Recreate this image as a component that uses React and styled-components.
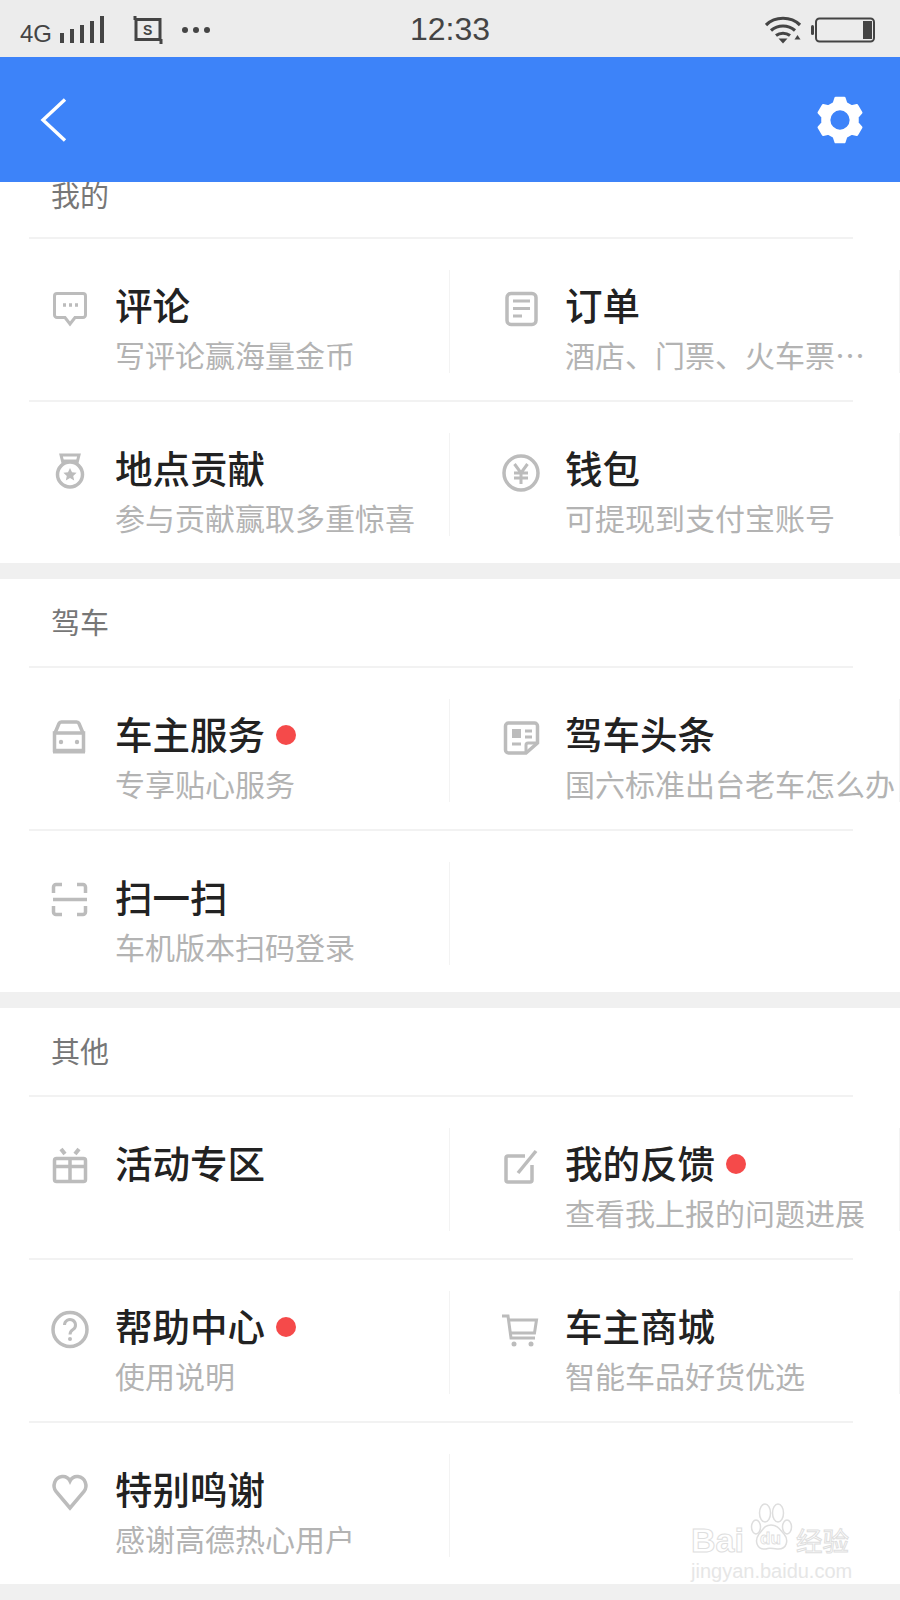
import React from 'react';
import styled, { createGlobalStyle } from 'styled-components';

const GlobalStyle = createGlobalStyle`
  html, body {
    margin: 0;
    padding: 0;
    background: #fff;
  }
`;

const Page = styled.div`
  position: relative;
  width: 900px;
  height: 1600px;
  overflow: hidden;
  background: #fff;
  font-family: "Noto Sans CJK SC", "Noto Sans", sans-serif;
`;

const StatusBar = styled.div`
  height: 57px;
  padding: 0 25px 0 20px;
  box-sizing: border-box;
  background: #ececec;
  color: #444;
  display: grid;
  grid-template-columns: 1fr auto 1fr;
  align-items: center;
  font-family: "Liberation Sans", Arial, sans-serif;
`;

const StatusLeft = styled.div`
  display: flex;
  align-items: center;
`;

const StatusRight = styled.div`
  display: flex;
  align-items: center;
  justify-content: flex-end;
  gap: 8px;
`;

const Network = styled.span`
  font-size: 24px;
  margin-top: 8px;
  margin-right: 8px;
`;

const Clock = styled.div`
  padding-left: 5px;
  font-size: 32px;
  line-height: 59px;
`;

const NavBar = styled.div`
  height: 125px;
  padding: 0 35px 0 38px;
  box-sizing: border-box;
  background: #3d83f9;
  display: flex;
  align-items: center;
  justify-content: space-between;
`;

const Section = styled.section`
  background: #fff;
`;

const Heading = styled.h2`
  margin: 0;
  padding: ${(p) => (p.$clipped ? '0' : '25px')} 0 0 51px;
  height: ${(p) => (p.$clipped ? '55px' : '87px')};
  box-sizing: border-box;
  overflow: hidden;
  font-size: 29px;
  font-weight: 400;
  line-height: ${(p) => (p.$clipped ? '24px' : '34px')};
  color: #777;
`;

const Rule = styled.div`
  height: 2px;
  margin: 0 47px 0 29px;
  background: #f2f2f2;
`;

const Row = styled.div`
  height: 161px;
  padding-top: 31px;
  box-sizing: border-box;
  display: grid;
  grid-template-columns: 450px 450px;
  align-items: start;
`;

const Cell = styled.div`
  height: 103px;
  padding-left: 51px;
  box-sizing: border-box;
  border-right: 1px solid #f3f3f3;
  display: flex;
  gap: 26px;
`;

const IconSlot = styled.svg`
  flex: none;
  width: 38px;
  height: 38px;
  margin-top: 19px;
  overflow: visible;
  fill: none;
  stroke: #bcbcbc;
  stroke-width: 3;
`;

const CellText = styled.div`
  padding-top: 14px;
  white-space: nowrap;
`;

const TitleLine = styled.div`
  display: flex;
  align-items: center;
  gap: 11px;
  height: 40px;
`;

const Title = styled.span`
  font-size: 37.5px;
  font-weight: 500;
  line-height: 40px;
  color: #222;
`;

const Dot = styled.i`
  width: 20px;
  height: 20px;
  margin-top: 3px;
  border-radius: 50%;
  background: #f54a4a;
`;

const Sub = styled.div`
  margin-top: 13px;
  font-size: 30px;
  line-height: 34px;
  color: #b3b3b3;
`;

const Band = styled.div`
  height: 16px;
  background: #f0f0f0;
`;

const Watermark = styled.div`
  position: absolute;
  left: 691px;
  top: 1503px;
  width: 170px;
  font-family: "Liberation Sans", Arial, sans-serif;
  color: #fff;
  -webkit-text-stroke: 1px #dedede;
`;

const MarkLine = styled.div`
  display: flex;
  align-items: flex-end;
  height: 50px;
`;

const MarkWord = styled.span`
  font-size: 34px;
  font-weight: 700;
  line-height: 26px;
`;

const MarkPaw = styled.svg`
  flex: none;
  width: 46px;
  height: 50px;
  margin: 0 2px 0 4px;
  fill: #fff;
  stroke: #dedede;
  stroke-width: 1.5;
`;

const MarkCn = styled.span`
  font-family: "Noto Sans CJK SC", sans-serif;
  font-size: 26.5px;
  line-height: 26px;
`;

const MarkUrl = styled.div`
  margin-top: 8px;
  font-size: 20px;
  line-height: 20px;
  color: #e6e6e6;
  -webkit-text-stroke: 0;
`;

function gearPath() {
  const c = 24;
  const pts = [];
  for (let i = 0; i < 6; i++) {
    const a = -90 + i * 60;
    [[-20, 17], [-11, 21.5], [11, 21.5], [20, 17]].forEach(([off, r]) => {
      const t = ((a + off) * Math.PI) / 180;
      pts.push(`${(c + r * Math.cos(t)).toFixed(2)} ${(c + r * Math.sin(t)).toFixed(2)}`);
    });
  }
  return `M${pts.join('L')}Z M34.5 24a10.5 10.5 0 1 0-21 0a10.5 10.5 0 1 0 21 0Z`;
}

const Back = () => (
  <svg width="30" height="48" viewBox="0 0 30 48" fill="none" stroke="#fff" strokeWidth="3.4">
    <path d="M27 3.500L5 24l22 20.500" />
  </svg>
);

const Gear = () => (
  <svg width="50" height="50" viewBox="0 0 48 48">
    <path d={gearPath()} fill="#fff" fillRule="evenodd" stroke="#fff" strokeWidth="2.500" strokeLinejoin="round" />
  </svg>
);

const Signal = () => (
  <svg width="46" height="28" viewBox="0 0 46 28" fill="#444" style={{ marginRight: 27 }}>
    <rect x="0" y="17" width="4" height="10" />
    <rect x="10" y="13" width="4" height="14" />
    <rect x="20" y="9" width="4" height="18" />
    <rect x="30" y="5" width="4" height="22" />
    <rect x="40" y="0" width="4" height="27" />
  </svg>
);

const Capture = () => (
  <svg width="31" height="28" viewBox="0 0 31 28" fill="none" stroke="#444" style={{ marginRight: 17 }}>
    <rect x="3" y="3.500" width="24" height="20" strokeWidth="3" />
    <path d="M2 0v4M28 23v5" strokeWidth="3" />
    <text x="10" y="19" fontSize="14" fontWeight="700" fill="#444" stroke="none" fontFamily="Liberation Sans">S</text>
  </svg>
);

const MoreDots = () => (
  <svg width="30" height="8" viewBox="0 0 30 8" fill="#444">
    <circle cx="4" cy="4" r="3" />
    <circle cx="15" cy="4" r="3" />
    <circle cx="26" cy="4" r="3" />
  </svg>
);

const Wifi = () => (
  <svg width="38" height="28" viewBox="0 0 38 28" fill="none" stroke="#444" strokeWidth="3.200">
    <path d="M1 9c9-9 25-9 34 0" />
    <path d="M6 14.500c7-6 17-6 24 0" />
    <path d="M11 19.500c4-3 10-3 14 0" />
    <path d="M13.500 22.500l4.500 5 4.500-5z" fill="#444" stroke="none" />
    <path d="M32.500 19l-3 4.500h6z" fill="#444" stroke="none" />
  </svg>
);

const Battery = () => (
  <svg width="64" height="28" viewBox="0 0 64 28" fill="none">
    <rect x="0" y="9" width="3" height="10" rx="1.500" fill="#444" />
    <rect x="5" y="2.500" width="58" height="23" rx="3.500" stroke="#444" strokeWidth="2" />
    <rect x="52" y="5" width="9" height="18" fill="#444" />
  </svg>
);

// 38x38 row icons, drawn against the reference
const icons = {
  comment: (
    <>
      <path d="M6 4.500h26a2.500 2.500 0 0 1 2.500 2.500v19a2.500 2.500 0 0 1-2.500 2.500h-8L19 35l-5-6.500H6A2.500 2.500 0 0 1 3.500 26V7A2.500 2.500 0 0 1 6 4.500Z" />
      <path d="M12 16h3M18 16h3M24 16h3" strokeWidth="3.500" />
    </>
  ),
  order: (
    <>
      <rect x="6" y="4.500" width="29" height="31" rx="4" strokeWidth="3.500" />
      <path d="M12 12h17M12 19.500h17M12 27h9" />
    </>
  ),
  medal: (
    <>
      <path d="M12 11L10 3h18l-2 8" />
      <path d="M12 9h14" />
      <circle cx="19" cy="22.500" r="12.500" strokeWidth="3.500" />
      <path d="M19 16l2 4.300 4.600.5-3.400 3.200 1 4.500-4.200-2.400-4.200 2.400 1-4.500-3.400-3.200 4.600-.5z" fill="#bcbcbc" stroke="none" />
    </>
  ),
  yen: (
    <>
      <circle cx="20" cy="21" r="17" strokeWidth="3.500" />
      <path d="M13.500 12l6.500 9 6.500-9M13 21h14M13 26h14M20 21v11" />
    </>
  ),
  car: (
    <>
      <path d="M4 15L8 5.500A2.500 2.500 0 0 1 10.300 4h15.400A2.500 2.500 0 0 1 28 5.500L32 15" strokeWidth="3.500" />
      <rect x="3.500" y="15" width="29" height="17.500" strokeWidth="3.500" />
      <path d="M2 34h32" strokeWidth="3" />
      <circle cx="10" cy="24" r="2.200" fill="#bcbcbc" stroke="none" />
      <circle cx="26" cy="24" r="2.200" fill="#bcbcbc" stroke="none" />
    </>
  ),
  news: (
    <>
      <path d="M25 35H7.500a3 3 0 0 1-3-3V8a3 3 0 0 1 3-3h26a3 3 0 0 1 3 3v17L25 35Z" strokeWidth="3.500" />
      <path d="M25 35v-8a2 2 0 0 1 2-2h9" />
      <rect x="11" y="11" width="9" height="9" fill="#bcbcbc" stroke="none" />
      <path d="M24 13h7M24 19h7M11 26h9" />
    </>
  ),
  scan: (
    <>
      <path d="M2.500 12V6a2.500 2.500 0 0 1 2.500-2.500h6M26 3.500h6A2.500 2.500 0 0 1 34.500 6v6M2.500 25v6A2.500 2.500 0 0 0 5 33.500h6M26 33.500h6a2.500 2.500 0 0 0 2.500-2.500v-6" strokeWidth="3.500" />
      <path d="M2 18.500h34" strokeWidth="3.500" />
    </>
  ),
  gift: (
    <>
      <rect x="3.500" y="11.500" width="31" height="23" rx="2" strokeWidth="3.500" />
      <path d="M3 19.500h32M19 11v23" strokeWidth="3.500" />
      <path d="M10 2l4 5M28 2l-4 5" strokeWidth="4" />
    </>
  ),
  edit: (
    <>
      <path d="M31 18v15a2 2 0 0 1-2 2H7a2 2 0 0 1-2-2V11a2 2 0 0 1 2-2h17" strokeWidth="3.500" />
      <path d="M35 4L17 26" strokeWidth="3.500" />
    </>
  ),
  help: (
    <>
      <circle cx="19" cy="19.500" r="17" strokeWidth="3.500" />
      <path d="M13.500 15a5.500 5.500 0 1 1 8.500 4.600c-2 1.300-3 2.400-3 5" />
      <circle cx="19" cy="29" r="2" fill="#bcbcbc" stroke="none" />
    </>
  ),
  cart: (
    <>
      <path d="M1 6h6l3 22h24" />
      <path d="M7.500 10h28l-2 13H9.500" />
      <circle cx="13" cy="34" r="2.500" fill="#bcbcbc" stroke="none" />
      <circle cx="30" cy="34" r="2.500" fill="#bcbcbc" stroke="none" />
    </>
  ),
  heart: (
    <path d="M19 35L5 18.500C1 13 3.500 4.500 11 3.500c3.500-.4 6.500 1.500 8 4.500 1.500-3 4.500-4.900 8-4.500 7.500 1 10 9.500 6 15L19 35Z" strokeWidth="3.500" />
  ),
};

const sections = [
  {
    name: '我的',
    clipped: true,
    rows: [
      [
        { icon: 'comment', title: '评论', sub: '写评论赢海量金币' },
        { icon: 'order', title: '订单', sub: '酒店、门票、火车票…' },
      ],
      [
        { icon: 'medal', title: '地点贡献', sub: '参与贡献赢取多重惊喜' },
        { icon: 'yen', title: '钱包', sub: '可提现到支付宝账号' },
      ],
    ],
  },
  {
    name: '驾车',
    rows: [
      [
        { icon: 'car', title: '车主服务', sub: '专享贴心服务', dot: true },
        { icon: 'news', title: '驾车头条', sub: '国六标准出台老车怎么办' },
      ],
      [{ icon: 'scan', title: '扫一扫', sub: '车机版本扫码登录' }],
    ],
  },
  {
    name: '其他',
    rows: [
      [
        { icon: 'gift', title: '活动专区' },
        { icon: 'edit', title: '我的反馈', sub: '查看我上报的问题进展', dot: true },
      ],
      [
        { icon: 'help', title: '帮助中心', sub: '使用说明', dot: true },
        { icon: 'cart', title: '车主商城', sub: '智能车品好货优选' },
      ],
      [{ icon: 'heart', title: '特别鸣谢', sub: '感谢高德热心用户' }],
    ],
  },
];

const Item = ({ icon, title, sub, dot }) => (
  <Cell>
    <IconSlot viewBox="0 0 38 38">{icons[icon]}</IconSlot>
    <CellText>
      <TitleLine>
        <Title>{title}</Title>
        {dot && <Dot />}
      </TitleLine>
      {sub && <Sub>{sub}</Sub>}
    </CellText>
  </Cell>
);

export default function App() {
  return (
    <Page>
      <GlobalStyle />
      <StatusBar>
        <StatusLeft>
          <Network>4G</Network>
          <Signal />
          <Capture />
          <MoreDots />
        </StatusLeft>
        <Clock>12:33</Clock>
        <StatusRight>
          <Wifi />
          <Battery />
        </StatusRight>
      </StatusBar>
      <NavBar>
        <Back />
        <Gear />
      </NavBar>
      {sections.map((section) => (
        <Section key={section.name}>
          <Heading $clipped={section.clipped}>{section.name}</Heading>
          {section.rows.map((row) => (
            <React.Fragment key={row[0].title}>
              <Rule />
              <Row>
                {row.map((item) => (
                  <Item key={item.title} {...item} />
                ))}
              </Row>
            </React.Fragment>
          ))}
          <Band />
        </Section>
      ))}
      <Watermark>
        <MarkLine>
          <MarkWord>Bai</MarkWord>
          <MarkPaw viewBox="0 0 46 50">
            <ellipse cx="8" cy="24" rx="4.500" ry="7" />
            <ellipse cx="17" cy="10" rx="5.500" ry="9" />
            <ellipse cx="30" cy="10" rx="5.500" ry="9" />
            <ellipse cx="39" cy="24" rx="4.500" ry="7" />
            <path d="M23 22c7 0 9 5 13 9 5 6 3 16-7 15-4 0-7-2-11 0-9 1-12-8-7-15 4-4 5-9 12-9Z" />
            <text x="12" y="41" fontSize="17" fontWeight="700" fill="#fff" stroke="#dedede" strokeWidth="0.800" fontFamily="Liberation Sans">du</text>
          </MarkPaw>
          <MarkCn>经验</MarkCn>
        </MarkLine>
        <MarkUrl>jingyan.baidu.com</MarkUrl>
      </Watermark>
    </Page>
  );
}
